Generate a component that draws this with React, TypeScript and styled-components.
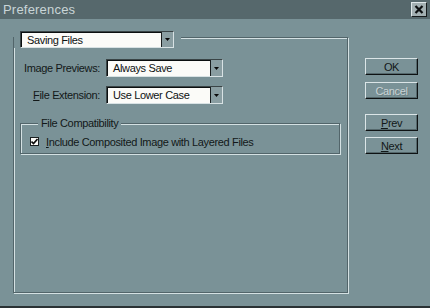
import React from "react";
import styled, { createGlobalStyle } from "styled-components";

const BG = "#7a9297";

const Global = createGlobalStyle`
  html, body { margin: 0; padding: 0; background: ${BG}; }
  body { font-family: "Liberation Sans", Arial, sans-serif; font-size: 11px; letter-spacing: -0.35px; color: #121818; }
`;

const Window = styled.div`
  width: 430px;
  height: 308px;
  display: flex;
  flex-direction: column;
  background: ${BG};
  overflow: hidden;
  border-bottom: 2px solid #2a3234;
  box-sizing: border-box;
`;

const TitleBar = styled.div`
  height: 19px;
  flex: none;
  display: flex;
  align-items: center;
  justify-content: space-between;
  background: #56686c;
  padding: 0 3px;
  box-sizing: border-box;
`;

const Title = styled.span`
  font-size: 13px;
  line-height: 19px;
  color: #c9d5d7;
  letter-spacing: 0.2px;
`;

const CloseButton = styled.div`
  width: 16px;
  height: 15px;
  box-sizing: border-box;
  background: #a3b0b2;
  border: 1px solid;
  border-color: #e0e8ea #151a1b #151a1b #e0e8ea;
  display: flex;
  align-items: center;
  justify-content: center;
`;

const Body = styled.div`
  flex: 1;
  display: flex;
  align-items: flex-start;
  padding: 18px 0 0 13px;
`;

const Group = styled.div`
  width: 335px;
  height: 256px;
  box-sizing: border-box;
  display: flex;
  flex-direction: column;
  border: 1px solid #52656a;
  box-shadow: 1px 1px 0 #d4e1e3, inset 1px 1px 0 #d4e1e3;
`;

const Header = styled.div`
  align-self: flex-start;
  margin-top: -7px;
  padding: 0 7px 0 6px;
  background: ${BG};
  display: flex;
`;

const SelectBox = styled.div<{ $w: number; $h: number }>`
  width: ${(p) => p.$w}px;
  height: ${(p) => p.$h}px;
  box-sizing: border-box;
  display: flex;
  align-items: stretch;
  background: #fbfbf8;
  border: 1px solid;
  border-color: #3a4446 #d8e2e4 #d8e2e4 #3a4446;
  box-shadow: inset 1px 1px 0 #0b0f10;
`;

const SelectText = styled.span`
  flex: 1;
  padding-left: 6px;
  display: flex;
  align-items: center;
  white-space: nowrap;
  color: #0e1212;
`;

const SelectArrow = styled.span`
  width: 11px;
  flex: none;
  background: #8a9ea2;
  border-left: 1px solid #1a1f20;
  display: flex;
  align-items: center;
  justify-content: center;
`;

const Form = styled.div`
  display: grid;
  grid-template-columns: 77px 117px;
  column-gap: 6px;
  row-gap: 9px;
  margin: 11px 0 0 9px;
  align-items: center;
`;

const Label = styled.span`
  justify-self: end;
  white-space: nowrap;
`;

const Key = styled.span`
  text-decoration: underline;
`;

const SubGroup = styled.div`
  height: 31px;
  margin: 19px 7px 0 6px;
  box-sizing: border-box;
  display: flex;
  flex-direction: column;
  border: 1px solid #52656a;
  box-shadow: 1px 1px 0 #d4e1e3, inset 1px 1px 0 #d4e1e3;
`;

const Legend = styled.span`
  align-self: flex-start;
  margin: -7px 0 0 17px;
  padding: 0 3px;
  line-height: 13px;
  background: ${BG};
`;

const CheckRow = styled.div`
  display: flex;
  align-items: center;
  gap: 7px;
  margin: 5px 0 0 9px;
  height: 13px;
`;

const CheckBox = styled.span`
  width: 9px;
  height: 9px;
  flex: none;
  box-sizing: border-box;
  background: #fbfbf8;
  border: 1px solid #1a1f20;
  display: flex;
  align-items: center;
  justify-content: center;
`;

const ButtonColumn = styled.div`
  display: flex;
  flex-direction: column;
  margin: 21px 0 0 17px;
`;

const Button = styled.div<{ $top: number; $disabled?: boolean }>`
  width: 53px;
  height: 17px;
  margin-top: ${(p) => p.$top}px;
  box-sizing: border-box;
  display: flex;
  align-items: center;
  justify-content: center;
  border: 1px solid;
  border-color: #dbe5e7 #0e1213 #0e1213 #dbe5e7;
  box-shadow: inset -1px -1px 0 #55686c;
  color: ${(p) => (p.$disabled ? "#c9d3d5" : "#121818")};
  text-shadow: ${(p) => (p.$disabled ? "1px 1px 0 #6a7e82" : "none")};
`;

function Select({ w, h, value }: { w: number; h: number; value: string }) {
  return (
    <SelectBox $w={w} $h={h}>
      <SelectText>{value}</SelectText>
      <SelectArrow>
        <svg width="5" height="3" viewBox="0 0 5 3">
          <path d="M0 0h5L2.5 3z" fill="#0a0a0a" />
        </svg>
      </SelectArrow>
    </SelectBox>
  );
}

export default function App() {
  return (
    <>
      <Global />
      <Window>
        <TitleBar>
          <Title>Preferences</Title>
          <CloseButton>
            <svg width="10" height="9" viewBox="0 0 10 9">
              <path d="M1.5 1l7 7M8.5 1l-7 7" stroke="#0c0f10" strokeWidth="2.2" />
            </svg>
          </CloseButton>
        </TitleBar>
        <Body>
          <Group>
            <Header>
              <Select w={154} h={17} value="Saving Files" />
            </Header>
            <Form>
              <Label>Image Previews:</Label>
              <Select w={117} h={18} value="Always Save" />
              <Label>
                <Key>F</Key>ile Extension:
              </Label>
              <Select w={117} h={18} value="Use Lower Case" />
            </Form>
            <SubGroup>
              <Legend>File Compatibility</Legend>
              <CheckRow>
                <CheckBox>
                  <svg width="7" height="7" viewBox="0 0 7 7">
                    <path d="M0.5 3.5l2 2 4-4.5" stroke="#0a0a0a" strokeWidth="1.6" fill="none" />
                  </svg>
                </CheckBox>
                <span>
                  <Key>I</Key>nclude Composited Image with Layered Files
                </span>
              </CheckRow>
            </SubGroup>
          </Group>
          <ButtonColumn>
            <Button $top={0}>OK</Button>
            <Button $top={7} $disabled>
              Cancel
            </Button>
            <Button $top={15}>
              <span>
                <Key>P</Key>rev
              </span>
            </Button>
            <Button $top={6}>
              <span>
                <Key>N</Key>ext
              </span>
            </Button>
          </ButtonColumn>
        </Body>
      </Window>
    </>
  );
}
